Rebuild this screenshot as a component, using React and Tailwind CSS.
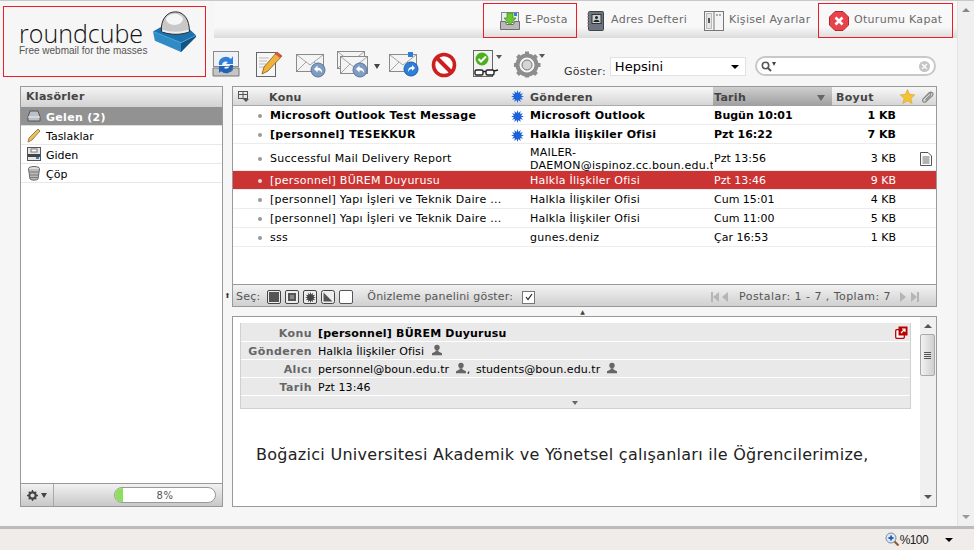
import { Fragment } from 'react';

const font = { fontFamily: '"DejaVu Sans", Verdana, sans-serif' };

const messages = [
  { subject: 'Microsoft Outlook Test Message', from: 'Microsoft Outlook', date: 'Bugün 10:01', size: '1 KB', unread: true, h: 'h-[19px] pt-[2px]' },
  { subject: '[personnel] TESEKKUR', from: 'Halkla İlişkiler Ofisi', date: 'Pzt 16:22', size: '7 KB', unread: true, h: 'h-[19px] pt-[2px]' },
  { subject: 'Successful Mail Delivery Report', from: 'MAILER-DAEMON@ispinoz.cc.boun.edu.tr', date: 'Pzt 13:56', size: '3 KB', doc: true, h: 'h-[27px] pt-[4px]' },
  { subject: '[personnel] BÜREM Duyurusu', from: 'Halkla İlişkiler Ofisi', date: 'Pzt 13:46', size: '9 KB', selected: true, h: 'h-[19px] pt-[2px]' },
  { subject: '[personnel] Yapı İşleri ve Teknik Daire ...', from: 'Halkla İlişkiler Ofisi', date: 'Cum 15:01', size: '4 KB', h: 'h-[19px] pt-[2px]' },
  { subject: '[personnel] Yapı İşleri ve Teknik Daire ...', from: 'Halkla İlişkiler Ofisi', date: 'Cum 11:00', size: '5 KB', h: 'h-[19px] pt-[2px]' },
  { subject: 'sss', from: 'gunes.deniz', date: 'Çar 16:53', size: '1 KB', h: 'h-[19px] pt-[2px]' },
];

function Burst({ size = 13, color = '#1d62d8' }) {
  const pts = [];
  for (let i = 0; i < 24; i++) {
    const r = i % 2 ? 3.6 : 6.4;
    const a = (i * Math.PI) / 12;
    pts.push(`${(6.5 + r * Math.cos(a)).toFixed(2)},${(6.5 + r * Math.sin(a)).toFixed(2)}`);
  }
  return (
    <svg width={size} height={size} viewBox="0 0 13 13">
      <polygon points={pts.join(' ')} fill={color} />
    </svg>
  );
}

function Person() {
  return (
    <svg width="12" height="12" viewBox="0 0 12 12" className="inline-block align-[-1px]">
      <circle cx="6" cy="3.4" r="2.7" fill="#666" />
      <path d="M4.5 6.2h3v1.4l3.5 1.6v2H1v-2l3.5-1.6z" fill="#666" />
    </svg>
  );
}

function Envelope({ x = 0, y = 0 }) {
  return (
    <g transform={`translate(${x} ${y})`}>
      <rect x="0.5" y="0.5" width="27" height="17" fill="#f4f4f4" stroke="#8a8a8a" />
      <path d="M1 1l13 10L27 1M1 17l9-9M27 17l-9-9" fill="none" stroke="#a5a5a5" />
    </g>
  );
}

function ArrowBall({ cx, cy, r = 7, color = '#7f9cc4' }) {
  return (
    <g>
      <circle cx={cx} cy={cy} r={r} fill={color} stroke="#5b7499" />
      <path d={`M${cx - 4} ${cy - 1}l3.500-3.500v2.200c3 0 5 2 4.500 5.300-1-2-2.500-2.700-4.500-2.700v2.200z`} fill="#fff" />
    </g>
  );
}

function Logo() {
  return (
    <div className="w-[203px] h-[71px] border border-[#ee1c25] flex items-start pl-[15px] pt-[3px] shrink-0">
      <div className="flex flex-col w-[132px] shrink-0">
        <span className="text-[25px] leading-[24px] mt-[11px] text-[#111]" style={{ fontFamily: '"Open Sans", sans-serif', fontWeight: 300 }}>roundcube</span>
        <span className="text-[10px] leading-[11px] text-[#555] whitespace-nowrap" style={{ fontFamily: '"Liberation Sans", sans-serif' }}>Free webmail for the masses</span>
      </div>
      <svg width="47" height="43" viewBox="0 0 48 46" className="shrink-0">
        <path d="M1 23l16-9h16l14 13-16 18z" fill="#1c72ac" />
        <path d="M1 23l30 12v10L3 33z" fill="#2f8bc6" />
        <path d="M31 35l16-8v2L31 45z" fill="#15527f" />
        <path d="M1 23l30 12 16-8" fill="none" stroke="#4fa8db" />
        <path d="M10 23C9 10 16 2 25 2s15 8 15 21c-8 4-20 4-30 0z" fill="#c8c8c8" stroke="#222" strokeWidth="1" />
        <ellipse cx="24" cy="10" rx="9" ry="6" fill="#f6f6f6" />
        <path d="M11 22c8 3 20 3 28 0" fill="none" stroke="#eee" strokeWidth="2" />
      </svg>
    </div>
  );
}

function NavIcon({ kind }) {
  if (kind === 'mail')
    return (
      <svg width="20" height="20" viewBox="0 0 20 20" className="shrink-0">
        <rect x="1.5" y="1.5" width="17" height="10" fill="#e8eef5" stroke="#888" />
        <rect x="14" y="2" width="3" height="3" fill="#2f7fd8" />
        <path d="M0.5 10.5h5l1 3h7l1-3h5v8h-19z" fill="#b9b9b9" stroke="#6c6c6c" />
        <path d="M7 2h6v5h3l-6 7-6-7h3z" fill="#6cc72f" stroke="#3e8c19" strokeWidth="0.7" />
      </svg>
    );
  if (kind === 'book')
    return (
      <svg width="20" height="20" viewBox="0 0 20 20" className="shrink-0">
        <rect x="2.5" y="0.5" width="15" height="19" rx="1" fill="#6c7480" stroke="#444" />
        <rect x="6" y="3.5" width="9" height="9" fill="#ccd1d6" stroke="#333" />
        <circle cx="10.5" cy="6.5" r="1.5" fill="#222" />
        <path d="M7.5 11c0-3 6-3 6 0z" fill="#222" />
        <path d="M1 3h3M1 6h3M1 9h3M1 12h3M1 15h3" stroke="#888" strokeWidth="1" />
      </svg>
    );
  if (kind === 'settings')
    return (
      <svg width="20" height="20" viewBox="0 0 20 20" className="shrink-0">
        <rect x="0.5" y="0.5" width="19" height="19" fill="#f4f4f4" stroke="#777" />
        <path d="M10 0.5v19" stroke="#777" />
        <rect x="2.5" y="2.5" width="5" height="15" fill="#e5e5e5" stroke="#bbb" />
        <path d="M5 7v5" stroke="#555" strokeWidth="2" />
        <circle cx="13" cy="4" r="0.9" fill="#888" />
        <circle cx="16" cy="4" r="0.9" fill="#888" />
      </svg>
    );
  return (
    <svg width="20" height="20" viewBox="0 0 20 20" className="shrink-0">
      <path d="M6 0.5h8l5.500 5.500v8l-5.500 5.500H6L0.500 14V6z" fill="#e8424a" stroke="#b5252b" />
      <path d="M6.5 6.5l7 7M13.5 6.5l-7 7" stroke="#fff" strokeWidth="2.6" />
    </svg>
  );
}

function NavItem({ kind, label, className }) {
  return (
    <div className={`h-[35px] flex items-center gap-[5px] shrink-0 ${className}`}>
      <NavIcon kind={kind} />
      <span className="text-[11px] text-[#6b6b6b] tracking-[0.3px] whitespace-nowrap">{label}</span>
    </div>
  );
}

function Toolbar() {
  return (
    <div className="flex items-end h-[40px] pl-[6px]">
      {/* refresh */}
      <svg width="28" height="28" viewBox="0 0 28 28" className="shrink-0">
        <rect x="1.5" y="1.5" width="25" height="15" fill="#eef2f6" stroke="#8a8a8a" />
        <path d="M1 18h6l1 3h12l1-3h6v8H1z" fill="#c5c5c5" stroke="#777" />
        <path d="M7 15a7 7 0 0 1 12-6l2-3v8h-7l2-2a4 4 0 0 0-6 3z" fill="#2f7fd8" />
        <path d="M21 15a7 7 0 0 1-12 6l-2 2v-7h7l-2 2a4 4 0 0 0 6-3z" fill="#1f62b8" />
      </svg>
      {/* compose */}
      <svg width="28" height="28" viewBox="0 0 28 28" className="ml-[15px] shrink-0">
        <rect x="1.5" y="2.5" width="19" height="24" fill="#f6f6f6" stroke="#666" />
        <path d="M4 8h10M4 11h8M4 14h7M4 17h6" stroke="#bbb" />
        <path d="M22 2l5 4-14 15-6 3 2-7z" fill="#efb23a" stroke="#8a5a12" strokeWidth="0.8" />
        <path d="M22 2l5 4-2 2-5-4z" fill="#d9534f" />
      </svg>
      {/* reply */}
      <svg width="30" height="26" viewBox="0 0 30 26" className="ml-[13px] shrink-0">
        <Envelope y="2" />
        <ArrowBall cx="22" cy="18" />
      </svg>
      {/* reply all */}
      <svg width="32" height="27" viewBox="0 0 32 27" className="ml-[11px] shrink-0">
        <Envelope y="0" />
        <Envelope x="3" y="5" />
        <ArrowBall cx="23" cy="19" />
      </svg>
      <span className="ml-[5px] mb-[9px] w-0 h-0 border-x-[3px] border-x-transparent border-t-[5px] border-t-[#444]"></span>
      {/* forward */}
      <svg width="30" height="27" viewBox="0 0 30 27" className="ml-[9px] shrink-0">
        <Envelope y="3" />
        <rect x="19" y="1" width="5" height="5" fill="#2f7fd8" />
        <circle cx="22" cy="18" r="7" fill="#2f7fd8" stroke="#1f5ca8" />
        <path d="M19 21c0-4 2-5 4-5v-2l3 3-3 3v-2c-2 0-3 1-4 3z" fill="#fff" />
      </svg>
      {/* delete */}
      <svg width="26" height="26" viewBox="0 0 26 26" className="ml-[12px] shrink-0">
        <circle cx="13" cy="13" r="10.5" fill="#fff" stroke="#cc2020" strokeWidth="3.6" />
        <path d="M6 6l14 14" stroke="#cc2020" strokeWidth="4" />
      </svg>
      {/* mark */}
      <svg width="30" height="28" viewBox="0 0 30 28" className="ml-[16px] shrink-0">
        <rect x="0.5" y="0.5" width="19" height="26" fill="#f2f2f2" stroke="#666" />
        <circle cx="9" cy="9" r="6.5" fill="#4caf1f" />
        <path d="M5.5 9l2.5 2.5 5-5" fill="none" stroke="#fff" strokeWidth="2" />
        <rect x="2" y="20" width="8" height="5" rx="1.5" fill="#fff" stroke="#222" strokeWidth="1.4" />
        <rect x="13" y="20" width="8" height="5" rx="1.5" fill="#fff" stroke="#222" strokeWidth="1.4" />
        <path d="M10 21.500h3M21 21l4-1" stroke="#222" strokeWidth="1.4" />
        <path d="M23 5h6l-3 4z" fill="#555" />
      </svg>
      {/* more */}
      <svg width="32" height="28" viewBox="0 0 32 28" className="ml-[10px] shrink-0">
        <circle cx="14" cy="15" r="9.5" fill="none" stroke="#8d8d8d" strokeWidth="4" />
        <circle cx="14" cy="15" r="5" fill="#d5d5d5" stroke="#777" />
        <path d="M14 1.500v5M14 23.500v4M1 15h4M23 15h4.500M4.500 5.500l3.500 3.500M20 21l3.500 3.500M23.500 5.500L20 9M8 21l-3.500 3.500" stroke="#8d8d8d" strokeWidth="4" />
        <path d="M26 4h6l-3 4z" fill="#555" />
      </svg>
      <span className="ml-[19px] -mb-[2px] text-[11px] text-[#333] tracking-[0.25px]">Göster:</span>
      <div className="ml-[4px] mb-[2px] w-[136px] h-[19px] border border-[#e2e2e2] bg-white flex items-center pl-1 pr-[6px] justify-between">
        <span className="text-[13px] text-black">Hepsini</span>
        <span className="w-0 h-0 border-x-[4px] border-x-transparent border-t-[4px] border-t-black"></span>
      </div>
      <div className="ml-[9px] mb-[2px] w-[181px] h-[20px] rounded-[10px] border-2 border-[#c8c8c8] bg-white flex items-center pl-1 pr-1 justify-between">
        <span className="flex items-center">
          <svg width="11" height="11" viewBox="0 0 11 11">
            <circle cx="4.500" cy="4.500" r="3.200" fill="none" stroke="#555" strokeWidth="1.600" />
            <path d="M7 7l3 3" stroke="#555" strokeWidth="2" />
          </svg>
          <span className="w-0 h-0 border-x-[2.5px] border-x-transparent border-t-[4px] border-t-[#444] -mt-1"></span>
        </span>
        <span className="w-[11px] h-[11px] rounded-full bg-[#c4c4c4] text-white flex items-center justify-center">
          <svg width="7" height="7" viewBox="0 0 7 7"><path d="M1 1l5 5M6 1l-5 5" stroke="#fff" strokeWidth="1.300" /></svg>
        </span>
      </div>
    </div>
  );
}

function SelectIcons() {
  return (
    <div className="flex items-center gap-[4px] ml-[7px]">
      <span className="w-[14px] h-[14px] rounded-[2px] border border-[#444] bg-[#eee] flex items-center justify-center"><span className="w-[10px] h-[10px] bg-[#555]"></span></span>
      <span className="w-[14px] h-[14px] rounded-[2px] border border-[#444] bg-[#eee] flex items-center justify-center"><span className="w-[8px] h-[8px] border-2 border-[#555] bg-[#888]"></span></span>
      <span className="w-[14px] h-[14px] rounded-[2px] border border-[#444] bg-[#eee] flex items-center justify-center"><Burst size={11} color="#444" /></span>
      <svg width="14" height="14" viewBox="0 0 14 14">
        <rect x="0.500" y="0.500" width="13" height="13" rx="2" fill="#eee" stroke="#444" />
        <path d="M2.500 2.500l9 9h-9z" fill="#555" />
      </svg>
      <span className="w-[14px] h-[14px] rounded-[2px] border border-[#555] bg-white"></span>
    </div>
  );
}

function MessageRow({ m }) {
  const color = m.selected ? 'text-white' : 'text-black';
  const weight = m.unread ? 'font-bold' : '';
  return (
    <div className={`grid grid-cols-[37px_243px_17px_183px_121px_62px_1fr] items-center border-b border-[#ececec] text-[11px] ${m.h} ${color} ${weight} ${m.selected ? 'bg-[#cc3333]' : 'bg-white'}`}>
      <span className="flex justify-end pr-[8px]"><span className={`w-[4px] h-[4px] rounded-full ${m.selected ? 'bg-[#dddddd]' : 'bg-[#999]'}`}></span></span>
      <span className="truncate tracking-[0.27px]">{m.subject}</span>
      <span className="flex -ml-[2px]">{m.unread && <Burst size={13} />}</span>
      <span className={`overflow-hidden tracking-[0.25px] ${m.doc ? 'leading-[13px]' : 'leading-[16.5px]'}`}>{m.from}</span>
      <span className="pl-[1px]">{m.date}</span>
      <span className="text-right">{m.size}</span>
      <span className="flex justify-end pr-[4px]">
        {m.doc && (
          <svg width="12" height="14" viewBox="0 0 12 14">
            <path d="M0.500 0.500h7.500l3.500 3.500v9.500H0.500z" fill="#fff" stroke="#555" />
            <path d="M2.500 5h7M2.500 7h7M2.500 9h7M2.500 11h7" stroke="#666" />
          </svg>
        )}
      </span>
    </div>
  );
}

function ListHeader() {
  return (
    <div className="grid grid-cols-[37px_243px_17px_183px_121px_62px_1fr] h-[19px] items-center border-b border-[#aaa] bg-gradient-to-b from-[#f8f8f8] to-[#d6d6d6] text-[11px] font-bold text-[#444] tracking-[0.3px]">
      <span className="pl-[4px]">
        <svg width="13" height="13" viewBox="0 0 13 13">
          <rect x="1.500" y="1.500" width="9" height="7" fill="none" stroke="#555" />
          <path d="M1.500 4.500h9M6 1.500v7" stroke="#555" />
          <path d="M6 9h6l-3 3z" fill="#555" />
        </svg>
      </span>
      <span className="pt-[3px] -ml-[1px]">Konu</span>
      <span className="flex -ml-[2px]"><Burst size={13} /></span>
      <span className="pt-[3px]">Gönderen</span>
      <span className="h-full flex items-center justify-between pt-[3px] pl-[1px] pr-[7px] bg-gradient-to-b from-[#cfcfcf] to-[#9c9c9c] mr-[2px]">
        Tarih
        <span className="w-0 h-0 border-x-[4px] border-x-transparent border-t-[6px] border-t-[#666]"></span>
      </span>
      <span className="pt-[3px] pl-[2px]">Boyut</span>
      <span className="flex items-center justify-end pr-[1px] gap-[5px]">
        <svg width="15" height="15" viewBox="0 0 14 14">
          <path d="M7 0.500l2 4.500 4.800.5-3.600 3.200 1 4.800L7 11l-4.200 2.500 1-4.800L.2 5.500 5 5z" fill="#f3c332" stroke="#d99a20" strokeWidth="0.500" />
        </svg>
        <svg width="15" height="14" viewBox="0 0 15 14">
          <path d="M3 9l6-6c2-2 5 0 3.500 2.500l-6.500 6c-1.500 1.500-4.500 0-3-2.500l6-5.500c1-1 2.500 0 1.500 1.500l-5 5" fill="none" stroke="#888" strokeWidth="1.200" />
        </svg>
      </span>
    </div>
  );
}

const headers = [
  ['Konu', <b key="s" className="tracking-[0.2px]">[personnel] BÜREM Duyurusu</b>],
  ['Gönderen', <Fragment key="f">Halkla İlişkiler Ofisi <span className="ml-[3px]"><Person /></span></Fragment>],
  ['Alıcı', <Fragment key="t">personnel@boun.edu.tr <span className="ml-[2px]"><Person /></span>, <span className="ml-[2px]">students@boun.edu.tr</span> <span className="ml-[2px]"><Person /></span></Fragment>],
  ['Tarih', 'Pzt 13:46'],
];

function Scrollbar({ outer }) {
  const up = outer ? 'border-b-[#888]' : 'border-b-[#555]';
  const down = outer ? 'border-t-[#999]' : 'border-t-[#555]';
  return (
    <div className={`h-full flex flex-col items-center justify-between bg-[#f0f0f0] shrink-0 ${outer ? 'w-[17px] border-l border-[#e4e4e4]' : 'w-[16px]'}`}>
      <span className={`mt-[7px] w-0 h-0 border-x-[4px] border-x-transparent border-b-[4px] ${up}`}></span>
      <span className={`mb-[7px] w-0 h-0 border-x-[4px] border-x-transparent border-t-[4px] ${down}`}></span>
    </div>
  );
}

export default function App() {
  return (
    <div className="w-[974px] h-[550px] overflow-hidden flex flex-col bg-[#f6f6f6]" style={font}>
      <div className="h-[526px] flex border-t border-[#c8c8c8]">
        <div className="w-[957px] flex flex-col">
          {/* header */}
          <div className="flex h-[78px] shrink-0 pl-[3px]">
            <div className="pt-[5px]"><Logo /></div>
            <div className="flex-1 flex flex-col">
              <div className="h-[37px] pt-[2px] flex pr-[4px] bg-gradient-to-b from-[#f8f8f8] from-70% to-[#dcdcdc] ml-[8px]">
                <div className="flex-1 flex justify-end">
                  <NavItem kind="mail" label="E-Posta" className="w-[94px] pl-[16px] border border-[#ee1c25]" />
                  <NavItem kind="book" label="Adres Defteri" className="w-[118px] pl-[9px]" />
                  <NavItem kind="settings" label="Kişisel Ayarlar" className="w-[123px] pl-[9px]" />
                  <NavItem kind="logout" label="Oturumu Kapat" className="w-[135px] pl-[10px] border border-[#ee1c25]" />
                </div>
              </div>
              <Toolbar />
            </div>
          </div>

          {/* main */}
          <div className="flex pt-[7px] pl-[20px] h-[429px] shrink-0">
            <div className="w-[203px] h-[421px] border border-[#999] bg-white flex flex-col shrink-0">
              <div className="h-[20px] flex items-center pl-[5px] bg-gradient-to-b from-[#f4f4f4] to-[#d2d2d2] text-[11px] font-bold text-[#444] tracking-[0.3px]">Klasörler</div>
              <div className="h-[19px] flex items-center gap-[5px] pl-[6px] pt-[5px] bg-[#929292] text-white font-bold text-[11px] border-b border-[#ddd] tracking-[0.3px]">
                <svg width="14" height="12" viewBox="0 0 14 12" className="-mt-[5px]">
                  <path d="M3 1h8l2 6v4H1V7z" fill="#b9c0c9" stroke="#555" />
                  <path d="M1 7h12" stroke="#eee" />
                </svg>
                Gelen (2)
              </div>
              <div className="h-[19px] flex items-center gap-[5px] pl-[6px] pt-[5px] text-[11px] text-black border-b border-[#e8e8e8]">
                <svg width="14" height="15" viewBox="0 0 14 15" className="-mt-[5px]">
                  <path d="M11 1l2 2-8 9-4 2 1-4z" fill="#e8c060" stroke="#8a6a2a" strokeWidth="0.800" />
                </svg>
                Taslaklar
              </div>
              <div className="h-[19px] flex items-center gap-[5px] pl-[6px] pt-[5px] text-[11px] text-black border-b border-[#e8e8e8]">
                <svg width="14" height="14" viewBox="0 0 14 14" className="-mt-[5px]">
                  <rect x="0.500" y="0.500" width="13" height="13" fill="#e6e6e6" stroke="#555" />
                  <rect x="4" y="2" width="6" height="3" fill="#fff" stroke="#777" />
                  <rect x="1" y="7" width="12" height="3" fill="#444" />
                  <rect x="9" y="10" width="3" height="2" fill="#2f7fd8" />
                </svg>
                Giden
              </div>
              <div className="h-[19px] flex items-center gap-[5px] pl-[6px] pt-[5px] text-[11px] text-black border-b border-[#e8e8e8]">
                <svg width="14" height="15" viewBox="0 0 14 15" className="-mt-[5px]">
                  <ellipse cx="7" cy="2.500" rx="5.500" ry="2" fill="#ddd" stroke="#666" />
                  <path d="M1.500 3l1.500 10c1 1.500 7 1.500 8 0l1.500-10" fill="#bbb" stroke="#666" />
                  <path d="M2.500 6h9M3 9h8M3.500 11.500h7" stroke="#777" />
                </svg>
                Çöp
              </div>
              <div className="flex-1"></div>
              <div className="h-[23px] border-t border-[#999] bg-gradient-to-b from-[#f2f2f2] to-[#c8c8c8] flex items-center">
                <div className="w-[33px] h-full border-r border-[#aaa] flex items-center justify-center gap-[3px]">
                  <svg width="11" height="11" viewBox="0 0 11 11">
                    <circle cx="5.500" cy="5.500" r="3.200" fill="none" stroke="#444" strokeWidth="2.200" />
                    <path d="M5.500 0v11M0 5.500h11M1.700 1.700l7.600 7.600M9.300 1.700l-7.600 7.600" stroke="#444" strokeWidth="1.300" strokeDasharray="2 7" />
                  </svg>
                  <span className="w-0 h-0 border-x-[3px] border-x-transparent border-t-[5px] border-t-[#444]"></span>
                </div>
                <div className="ml-auto mr-[6px] w-[102px] h-[16px] rounded-[8px] border border-[#999] bg-white overflow-hidden relative flex items-center justify-center">
                  <span className="absolute left-0 top-0 bottom-0 w-[8px] bg-[#8fdf5f]"></span>
                  <span className="text-[10px] text-[#555] tracking-[0.5px]">8%</span>
                </div>
              </div>
            </div>

            <div className="w-[9px] shrink-0 flex items-start justify-center pt-[207px]">
              <span className="text-[7px] leading-none text-[#333]">⬆</span>
            </div>

            <div className="w-[705px] flex flex-col shrink-0">
              <div className="h-[221px] border border-[#999] flex flex-col bg-white shrink-0">
                <ListHeader />
                {messages.map((m, i) => <MessageRow key={i} m={m} />)}
                <div className="flex-1"></div>
                <div className="h-[22px] border-t border-[#999] bg-gradient-to-b from-[#f2f2f2] to-[#d0d0d0] flex items-center pl-[3px] pr-[17px] pt-[3px] text-[11px] text-[#555] tracking-[0.2px]">
                  <span>Seç:</span>
                  <SelectIcons />
                  <span className="ml-[14px]">Önizleme panelini göster:</span>
                  <span className="ml-[9px] w-[13px] h-[13px] border border-[#777] bg-white flex items-center justify-center">
                    <svg width="8" height="8" viewBox="0 0 8 8"><path d="M1 4l2 2.500L7 1" fill="none" stroke="#222" strokeWidth="1.200" /></svg>
                  </span>
                  <span className="ml-auto flex items-center gap-[8px]">
                    <svg width="20" height="10" viewBox="0 0 20 10"><path d="M0 0h2v10H0zM8 0v10L2 5zM17 0v10L11 5z" fill="#b5b5b5" /></svg>
                    <span className="tracking-[0.45px]">Postalar: 1 - 7 , Toplam: 7</span>
                    <svg width="20" height="10" viewBox="0 0 20 10"><path d="M1 0v10l6-5zM12 0v10l6-5zM18 0h2v10h-2z" fill="#b5b5b5" /></svg>
                  </span>
                </div>
              </div>
              <div className="h-[9px] shrink-0 flex justify-center pr-[4px] text-[6px] leading-[9px] text-[#444]">▲</div>
              <div className="h-[191px] border border-[#999] bg-white flex shrink-0">
                <div className="flex-1 overflow-hidden pl-[7px] pt-[6px]">
                  <div className="w-[671px] h-[86px] pt-[1px] bg-[#e9e9e9] border-x border-b border-[#d0d0d0] relative text-[11px] text-black">
                    {headers.map(([k, v]) => (
                      <div key={k} className="h-[18px] flex items-center pt-[4px] border-b border-white">
                        <span className="w-[71px] text-right font-bold text-[#666] tracking-[0.4px]">{k}</span>
                        <span className="ml-[6px] tracking-[0.07px]">{v}</span>
                      </div>
                    ))}
                    <span className="absolute left-[331px] bottom-[3px] w-0 h-0 border-x-[3px] border-x-transparent border-t-[4px] border-t-[#666]"></span>
                    <svg width="13" height="13" viewBox="0 0 13 13" className="absolute right-[2px] top-[3px]">
                      <rect x="0.700" y="3.700" width="8.600" height="8.600" rx="1" fill="#fff" stroke="#b00" strokeWidth="1.300" />
                      <rect x="3.500" y="0.500" width="9" height="9" fill="#b00" />
                      <path d="M6 7l4-4M7 3h3v3" stroke="#fff" strokeWidth="1.200" fill="none" />
                    </svg>
                  </div>
                  <p className="mt-[36px] ml-[16px] text-[16px] leading-[20px] tracking-[0.28px] whitespace-nowrap text-[#222]">Boğazici Universitesi Akademik ve Yönetsel çalışanları ile Öğrencilerimize,</p>
                </div>
                <div className="relative">
                  <Scrollbar />
                  <div className="absolute left-0 top-[17px] w-[15px] h-[42px] rounded-[2px] border border-[#aaa] bg-gradient-to-r from-[#f2f2f2] to-[#cfcfcf] flex flex-col items-center justify-center gap-[1px]">
                    <span className="w-[7px] h-px bg-[#555]"></span>
                    <span className="w-[7px] h-px bg-[#555]"></span>
                    <span className="w-[7px] h-px bg-[#555]"></span>
                    <span className="w-[7px] h-px bg-[#555]"></span>
                  </div>
                </div>
              </div>
            </div>
          </div>
        </div>
        <Scrollbar outer />
      </div>
      {/* status bar */}
      <div className="h-[24px] border-t-[3px] border-[#bcbcbc] bg-[#f0ecea] flex items-center justify-end pr-[21px] text-[11px] text-[#222]" style={{ fontFamily: '"Liberation Sans", sans-serif' }}>
        <svg width="15" height="15" viewBox="0 0 15 15">
          <circle cx="6" cy="6" r="5" fill="#dfe9f5" stroke="#7a8a9e" />
          <path d="M3.500 6h5M6 3.500v5" stroke="#1f62b8" strokeWidth="1.800" />
          <path d="M9.500 9.500l4 4" stroke="#8a5a2a" strokeWidth="2" />
        </svg>
        <span className="text-[12px] tracking-[-0.6px]">%100</span>
        <span className="ml-[17px] w-0 h-0 border-x-[4px] border-x-transparent border-t-[4px] border-t-black"></span>
      </div>
    </div>
  );
}
